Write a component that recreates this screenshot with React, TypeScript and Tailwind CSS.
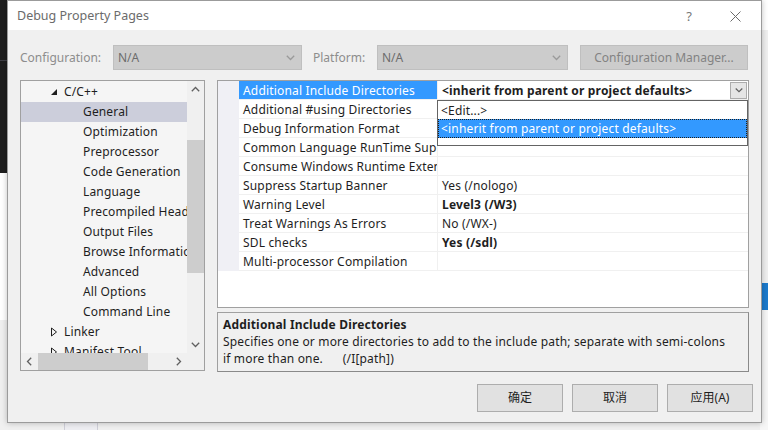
import React from 'react';

type Dir = 'up' | 'down' | 'left' | 'right';

function Chevron({ dir, color = '#606060', size = 9 }: { dir: Dir; color?: string; size?: number }) {
  const rot = { down: 0, up: 180, left: 90, right: -90 }[dir];
  return (
    <svg width={size} height={size} viewBox="0 0 9 9" style={{ transform: `rotate(${rot}deg)` }}>
      <path d="M0.8 2.8 L4.5 6.5 L8.2 2.8" fill="none" stroke={color} strokeWidth="1.3" />
    </svg>
  );
}

const tree: { label: string; level: 0 | 1; exp?: 'open' | 'closed'; selected?: boolean }[] = [
  { label: 'C/C++', level: 0, exp: 'open' },
  { label: 'General', level: 1, selected: true },
  { label: 'Optimization', level: 1 },
  { label: 'Preprocessor', level: 1 },
  { label: 'Code Generation', level: 1 },
  { label: 'Language', level: 1 },
  { label: 'Precompiled Headers', level: 1 },
  { label: 'Output Files', level: 1 },
  { label: 'Browse Information', level: 1 },
  { label: 'Advanced', level: 1 },
  { label: 'All Options', level: 1 },
  { label: 'Command Line', level: 1 },
  { label: 'Linker', level: 0, exp: 'closed' },
  { label: 'Manifest Tool', level: 0, exp: 'closed' },
];

const props: { name: string; value: string; bold?: boolean }[] = [
  { name: 'Additional Include Directories', value: '<inherit from parent or project defaults>', bold: true },
  { name: 'Additional #using Directories', value: '' },
  { name: 'Debug Information Format', value: '' },
  { name: 'Common Language RunTime Support', value: '' },
  { name: 'Consume Windows Runtime Extension', value: '' },
  { name: 'Suppress Startup Banner', value: 'Yes (/nologo)' },
  { name: 'Warning Level', value: 'Level3 (/W3)', bold: true },
  { name: 'Treat Warnings As Errors', value: 'No (/WX-)' },
  { name: 'SDL checks', value: 'Yes (/sdl)', bold: true },
  { name: 'Multi-processor Compilation', value: '' },
];

function Expander({ kind }: { kind: 'open' | 'closed' }) {
  if (kind === 'open')
    return (
      <svg width="8" height="8" viewBox="0 0 8 8">
        <path d="M7 1 L7 7 L1 7 Z" fill="#1e1e1e" />
      </svg>
    );
  return (
    <svg width="8" height="10" viewBox="0 0 8 10">
      <path d="M1.5 1 L6.5 5 L1.5 9 Z" fill="none" stroke="#1e1e1e" strokeWidth="1" />
    </svg>
  );
}

function TreePanel() {
  return (
    <div className="flex h-[291px] w-[185px] flex-col border border-[#a0a0a0] bg-[#f5f5f5]">
      <div className="flex min-h-0 flex-1">
        <div className="min-w-0 flex-1 overflow-hidden pt-px">
          {tree.map((t) => (
            <div
              key={t.label}
              className={`flex h-[20px] items-center whitespace-nowrap text-[12px] tracking-[0.15px] text-[#1e1e1e] ${
                t.selected ? 'bg-[#cccedb]' : ''
              }`}
            >
              {t.level === 0 ? (
                <>
                  <span className="flex w-[43px] justify-end pr-[6px]">
                    <Expander kind={t.exp!} />
                  </span>
                  <span>{t.label}</span>
                </>
              ) : (
                <span className="pl-[62px]">{t.label}</span>
              )}
            </div>
          ))}
        </div>
        <div className="flex w-[17px] flex-col items-center bg-[#f0f0f0]">
          <div className="flex h-[17px] items-center">
            <Chevron dir="up" />
          </div>
          <div className="mt-[42px] h-[133px] w-[17px] bg-[#cdcdcd]" />
          <div className="flex-1" />
          <div className="flex h-[17px] items-center">
            <Chevron dir="down" />
          </div>
        </div>
      </div>
      <div className="flex h-[17px] items-center bg-[#f0f0f0]">
        <div className="flex w-[17px] justify-center">
          <Chevron dir="left" />
        </div>
        <div className="h-[17px] w-[110px] bg-[#cdcdcd]" />
        <div className="flex-1" />
        <div className="flex w-[17px] justify-center">
          <Chevron dir="right" />
        </div>
        <div className="w-[17px]" />
      </div>
    </div>
  );
}

function PropertyGrid() {
  return (
    <div className="relative h-[228px] border border-[#a0a0a0] bg-white">
      {props.map((p, i) => {
        const sel = i === 0;
        return (
          <div key={p.name} className="flex h-[19px] text-[12px] tracking-[0.17px]">
            <div className="w-[21px] bg-[#f0f0f5]" />
            <div
              className={`w-[199px] overflow-hidden whitespace-nowrap border-r border-b border-[#f0f0f0] pl-[4px] pt-[2px] leading-[16px] ${
                sel ? 'bg-[#3399ff] text-white' : 'text-[#1e1e1e]'
              }`}
            >
              {p.name}
            </div>
            <div
              className={`flex flex-1 items-center border-b border-[#f0f0f0] pl-[4px] text-[#1e1e1e] ${
                p.bold ? 'font-bold' : ''
              }`}
            >
              <span className="flex-1 whitespace-nowrap pt-[2px] leading-[16px]">{p.value}</span>
              {sel && (
                <span className="mr-px flex h-[17px] w-[17px] items-center justify-center border border-[#acacac] bg-[#e5e5e5]">
                  <Chevron dir="down" size={8} />
                </span>
              )}
            </div>
          </div>
        );
      })}
      <div className="absolute left-[219px] top-[19px] h-[46px] w-[311px] border border-[#646464] bg-white text-[12px] tracking-[0.17px]">
        <div className="h-[18px] pl-[3px] pt-[2px] leading-[16px] text-[#1e1e1e]">&lt;Edit...&gt;</div>
        <div className="h-[19px] border border-dotted border-[#1e1e1e] bg-[#3399ff] pl-[2px] pt-[1px] leading-[16px] text-white">
          &lt;inherit from parent or project defaults&gt;
        </div>
      </div>
    </div>
  );
}

export default function App() {
  return (
    <div className="relative h-[430px] w-[768px] overflow-hidden bg-[#f0f0f0] font-['Noto_Sans','Noto_Sans_CJK_SC',sans-serif]">
      {/* stuff behind the dialog */}
      <div className="absolute left-0 top-0 h-[173px] w-[10px] bg-[#1e1e1e]" />
      <div className="absolute left-0 top-[60px] h-px w-[10px] bg-[#3f3f46]" />
      <div className="absolute left-0 top-[173px] h-[147px] w-[10px] bg-white" />
      <div className="absolute left-[760px] top-0 h-[30px] w-[8px] bg-white" />
      <div className="absolute left-[760px] top-[283px] h-[27px] w-[8px] bg-[#1c7acc]" />
      <div className="absolute left-[760px] top-[310px] h-[120px] w-[8px] bg-[#f7f7f7]" />
      <div className="absolute left-[64px] top-[422px] h-[8px] w-[34px] border-x border-[#cfcfd8] bg-[#eeeef2]" />

      {/* dialog */}
      <div className="absolute left-[7px] top-0 flex h-[423px] w-[755px] flex-col border border-[#9b9b9b] bg-[#f0f0f0] shadow-[0_0_6px_rgba(0,0,0,0.25)]">
        <div className="flex h-[29px] items-center bg-white pl-[9px] pt-[2px] text-[12.5px] text-[#6b6b6b]">
          <span className="flex-1">Debug Property Pages</span>
          <span className="mr-[38px] text-[13px] text-[#777]">?</span>
          <svg className="mr-[20px]" width="11" height="11" viewBox="0 0 11 11">
            <path d="M0.5 0.5 L10.5 10.5 M10.5 0.5 L0.5 10.5" stroke="#6b6b6b" strokeWidth="1" />
          </svg>
        </div>

        <div className="mt-[15px] flex h-[25px] items-center pl-[12px] text-[12px]">
          <span className="w-[93px] text-[#8d8d8d]">Configuration:</span>
          <div className="flex h-[25px] w-[189px] items-center border border-[#bfbfbf] bg-[#cccccc] pl-[4px] pr-[6px] text-[#6d6d6d]">
            <span className="flex-1">N/A</span>
            <Chevron dir="down" color="#9a9a9a" />
          </div>
          <span className="ml-[11px] w-[64px] text-[#8d8d8d]">Platform:</span>
          <div className="flex h-[25px] w-[191px] items-center border border-[#bfbfbf] bg-[#cccccc] pl-[4px] pr-[6px] text-[#6d6d6d]">
            <span className="flex-1">N/A</span>
            <Chevron dir="down" color="#9a9a9a" />
          </div>
          <div className="ml-[12px] flex h-[25px] w-[168px] items-center justify-center border border-[#bfbfbf] bg-[#cccccc] text-[#838383]">
            Configuration Manager...
          </div>
        </div>

        <div className="mt-[10px] flex pl-[12px]">
          <TreePanel />
          <div className="ml-[12px] flex w-[532px] flex-col gap-[4px]">
            <PropertyGrid />
            <div className="h-[60px] border border-[#a0a0a0] border-b-[#8a8a8a] border-r-[#8a8a8a] bg-[#f0f0f0] px-[5px] pt-[3px] text-[12px] leading-[17px] tracking-[0.17px] text-[#1e1e1e]">
              <div className="font-bold">Additional Include Directories</div>
              <div>Specifies one or more directories to add to the include path; separate with semi-colons</div>
              <div>
                if more than one.{'\u00a0\u00a0\u00a0\u00a0\u00a0'} (/I[path])
              </div>
            </div>
          </div>
        </div>

        <div className="mt-[12px] flex justify-end gap-[9px] pr-[8px] text-[12px] text-[#1e1e1e]">
          {['确定', '取消', '应用(A)'].map((b) => (
            <div
              key={b}
              className="flex h-[28px] w-[86px] items-center justify-center border border-[#adadad] bg-[#e1e1e1]"
            >
              {b}
            </div>
          ))}
        </div>
      </div>
    </div>
  );
}
